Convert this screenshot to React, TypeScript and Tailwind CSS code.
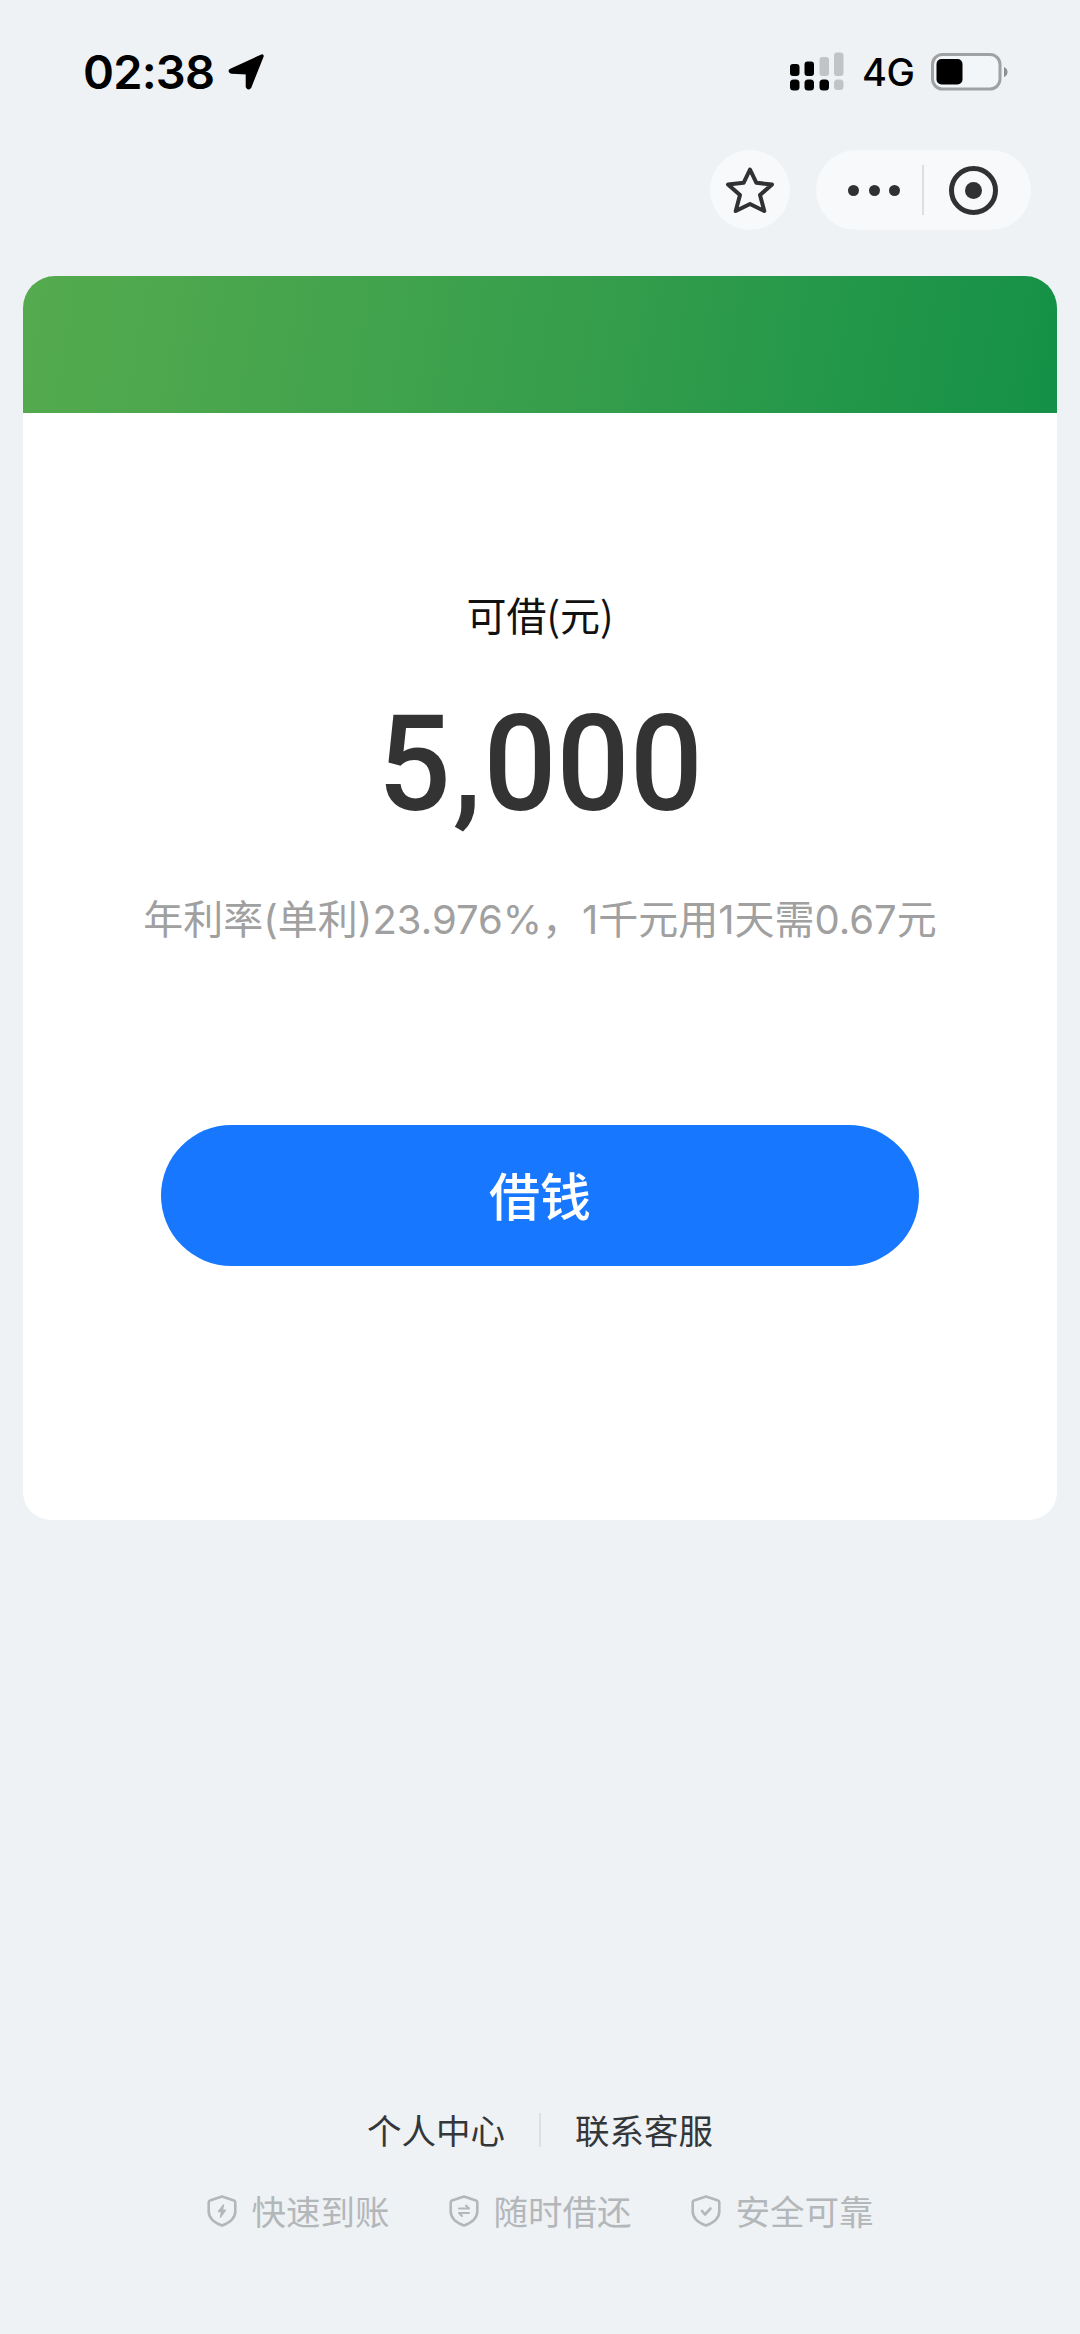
import type { ReactNode } from 'react'

function StatusBar() {
  return (
    <div className="flex h-36 items-center justify-between pr-[72px] pl-[83px]">
      <div className="flex items-center gap-[14px]">
        <span className="pb-0.5 font-['Inter',sans-serif] text-[47px] leading-none font-semibold tracking-[-0.8px] text-black">
          02:38
        </span>
        <svg width="38" height="38" viewBox="0 0 38 38">
          <path
            d="M3 17.2 34 3 21.8 33.8q-1.2 2-2.4-.2V19.8L3.4 19q-2-.8-.4-1.8Z"
            fill="#000"
            stroke="#000"
            strokeWidth="3.4"
            strokeLinejoin="round"
          />
        </svg>
      </div>
      <div className="flex items-center">
        <svg width="54" height="40" viewBox="0 0 54 40">
          <g fill="#000">
            <rect x="0" y="12" width="9.5" height="12" rx="3" />
            <rect x="14.5" y="9.5" width="9.5" height="14.5" rx="3" />
            <rect x="0" y="27.5" width="9.5" height="11" rx="3.5" />
            <rect x="14.5" y="27.5" width="9.5" height="11" rx="3.5" />
            <rect x="29.5" y="27.5" width="9.5" height="11" rx="3.5" />
          </g>
          <g fill="#c1c4c6">
            <rect x="29.5" y="5" width="9.5" height="19" rx="3" />
            <rect x="44" y="0.5" width="9.5" height="23.5" rx="3" />
            <rect x="44" y="27.5" width="9.5" height="10.5" rx="3.5" />
          </g>
        </svg>
        <span className="ml-[18px] w-[54px] font-['Inter',sans-serif] text-[38px] leading-none font-medium tracking-[-0.5px] whitespace-nowrap text-black">
          4G
        </span>
        <svg className="ml-[15px]" width="77" height="38" viewBox="0 0 77 38">
          <rect
            x="1.5"
            y="1.5"
            width="67.5"
            height="34.5"
            rx="10"
            fill="#f3f6f8"
            stroke="#9fa1a3"
            strokeWidth="3"
          />
          <rect x="5.5" y="6" width="26" height="25.5" rx="5" fill="#000" />
          <path d="M73 14q3.5 1.5 3.5 5T73 24Z" fill="#8d8f91" />
        </svg>
      </div>
    </div>
  )
}

function Capsule() {
  return (
    <div className="mt-1.5 flex justify-end gap-[26px] pr-[49px]">
      <div className="flex size-20 items-center justify-center rounded-full bg-[#f7f9fb]">
        <svg width="52" height="52" viewBox="0 0 52 52">
          <path
            d="M26 5.5 32.4 18.8 48 20.5 36 31 40.3 47 26 40 11.7 47 16 31 4 20.5 19.6 18.8Z"
            fill="none"
            stroke="#2f3133"
            strokeWidth="4"
            strokeLinejoin="round"
          />
        </svg>
      </div>
      <div className="flex h-20 w-[215px] items-center rounded-full bg-[#f7f9fb] pl-[32px]">
        <div className="flex gap-[9.5px]">
          <span className="size-[11px] rounded-full bg-[#2f3133]" />
          <span className="size-[11px] rounded-full bg-[#2f3133]" />
          <span className="size-[11px] rounded-full bg-[#2f3133]" />
        </div>
        <span className="ml-[22px] h-[50px] w-[2px] bg-[#dcdee0]" />
        <span className="ml-[25px] flex size-[49px] items-center justify-center rounded-full border-[5.5px] border-[#2f3133]">
          <span className="size-[17px] rounded-full bg-[#2f3133]" />
        </span>
      </div>
    </div>
  )
}

function Shield({ children }: { children: ReactNode }) {
  return (
    <svg
      className="mt-0.5"
      width="30"
      height="32"
      viewBox="0 0 30 32"
      fill="none"
      stroke="#b4b7ba"
      strokeWidth="2.6"
      strokeLinecap="round"
      strokeLinejoin="round"
    >
      <path d="M15 1.5 27 5.5q1.3.5 1.3 1.9v9C28.3 23 23 27.5 15 30.5 7 27.5 1.7 23 1.7 16.400v-9q0-1.400 1.300-1.900Z" />
      {children}
    </svg>
  )
}

const features = [
  {
    label: '快速到账',
    icon: <path d="m16.5 10-5 6.5h3.200L13.500 22l5-6.800h-3.200Z" fill="#b4b7ba" strokeWidth="1.4" />,
  },
  {
    label: '随时借还',
    icon: <path d="M10 13.5h10l-3-3M20 18H10l3 3" strokeWidth="2" />,
  },
  {
    label: '安全可靠',
    icon: <path d="m11 16 3 3.5 5.500-6" />,
  },
]

export default function App() {
  return (
    <div className="flex h-[2334px] w-[1080px] flex-col bg-[#eef2f5] font-['Noto_Sans_CJK_SC',sans-serif]">
      <StatusBar />
      <Capsule />

      <main className="mt-[46px] ml-[23px] flex h-[1244px] w-[1034px] flex-col items-center overflow-hidden rounded-t-[32px] rounded-b-[28px] bg-white">
        <div className="h-[137px] w-full shrink-0 bg-linear-[100deg] from-[#55ab4e] via-[#389f4c] to-[#149147]" />
        <p className="mt-[181px] text-[40px] leading-[40px] text-[#111]">
          可借(元)
        </p>
        <p className="mt-[61px] flex h-[140px] scale-x-[0.96] items-center font-['Roboto',sans-serif] text-[134px] leading-none font-medium text-[#333]">
          5<span className="mr-[2px] ml-[2px]">,</span>000
        </p>
        <p className="mt-[61px] font-['Inter','Noto_Sans_CJK_SC',sans-serif] text-[40px] leading-[48px] whitespace-nowrap text-[#a0a0a0]">
          年利率(单利)23.976%，1千元用1天需0.67元
        </p>
        <button className="mt-[181px] h-[141px] w-[758px] rounded-full bg-[#1777ff] pb-[3px] text-[51px] leading-none font-medium text-white">
          借钱
        </button>
      </main>

      <footer className="mt-[584px] flex flex-col items-center">
        <nav className="flex h-[50px] items-center text-[34.5px] leading-[50px] text-[#34373a]">
          <span>个人中心</span>
          <span className="mt-0.5 mr-[34px] ml-[34px] h-[34px] w-[2px] bg-[#dde0e3]" />
          <span>联系客服</span>
        </nav>
        <ul className="mt-[31px] flex gap-[59px] text-[34.5px] leading-[50px] text-[#b4b7ba]">
          {features.map((f) => (
            <li key={f.label} className="flex items-center gap-[15px]">
              <Shield>{f.icon}</Shield>
              {f.label}
            </li>
          ))}
        </ul>
      </footer>
    </div>
  )
}
